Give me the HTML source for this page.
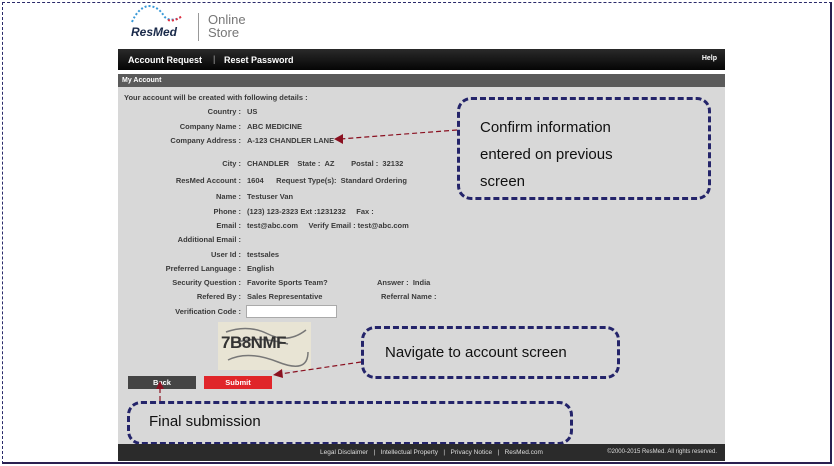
<!DOCTYPE html>
<html><head><meta charset="utf-8"><style>
*{margin:0;padding:0;box-sizing:border-box}
body{width:834px;height:466px;background:#fff;position:relative;overflow:hidden;font-family:"Liberation Sans",Arial,sans-serif}
.a{position:absolute}
.frame{left:2px;top:2px;width:830px;height:462px;border:1px dashed #2a2a6a;border-right:2px solid #2a2050;border-bottom:2px solid #2a2050}
.nav{left:118px;top:49px;width:607px;height:21px;background:linear-gradient(#2a2a2a,#050505);color:#fff;font-weight:bold;font-size:9px}
.hdr{left:118px;top:74px;width:607px;height:13px;background:#5a5a5a;color:#fff;font-weight:bold;font-size:7px;padding:3px 4px}
.body{left:118px;top:87px;width:607px;height:357px;background:#d8d8d8}
.foot{left:118px;top:444px;width:607px;height:17px;background:#2b2b2b;color:#ddd;font-size:6.5px}
.t{position:absolute;font-size:7.5px;font-weight:bold;color:#3a3a3a;white-space:nowrap}
.l{position:absolute;font-size:7.5px;font-weight:bold;color:#3a3a3a;white-space:nowrap;right:593px;text-align:right}
.box{position:absolute;border:3px dashed #24246a;border-radius:14px;font-size:15px;color:#111;white-space:nowrap}
.btn{position:absolute;height:13px;top:376px;color:#fff;font-size:7.5px;font-weight:bold;text-align:center;line-height:13px}
</style></head><body>
<div class="a frame"></div>
<svg class="a" style="left:128px;top:2px" width="60" height="24"><path d="M4 20 Q10 6 20 4 Q30 4 36 14 Q40 20 52 16" fill="none" stroke="#3a9ad8" stroke-width="2" stroke-dasharray="2 2"/><path d="M40 18 Q46 20 54 14" stroke="#e03040" stroke-width="2" fill="none" stroke-dasharray="2 2"/></svg>
<div class="a" style="left:131px;top:25px;font-size:12px;font-weight:bold;font-style:italic;color:#1a2a4a">ResMed</div>
<div class="a" style="left:198px;top:13px;width:1px;height:28px;background:#999"></div>
<div class="a" style="left:208px;top:13px;font-size:13px;color:#777;line-height:13px">Online<br>Store</div>
<div class="a nav"><span class="a" style="left:10px;top:6px">Account Request</span><span class="a" style="left:95px;top:5px;font-weight:normal;color:#aaa">|</span><span class="a" style="left:106px;top:6px">Reset Password</span><span class="a" style="right:8px;top:6px;font-size:7px">Help</span></div>
<div class="a hdr">My Account</div>
<div class="a body"></div>
<div class="t" style="left:124px;top:93px">Your account will be created with following details :</div>
<div class="l" style="top:107px">Country :</div><div class="t" style="left:247px;top:107px">US</div>
<div class="l" style="top:122px">Company Name :</div><div class="t" style="left:247px;top:122px">ABC MEDICINE</div>
<div class="l" style="top:136px">Company Address :</div><div class="t" style="left:247px;top:136px">A-123 CHANDLER LANE</div>
<div class="l" style="top:159px">City :</div><div class="t" style="left:247px;top:159px">CHANDLER &nbsp;&nbsp; State : &nbsp;AZ &nbsp;&nbsp;&nbsp;&nbsp;&nbsp;&nbsp; Postal : &nbsp;32132</div>
<div class="l" style="top:176px">ResMed Account :</div><div class="t" style="left:247px;top:176px">1604 &nbsp;&nbsp;&nbsp;&nbsp; Request Type(s): &nbsp;Standard Ordering</div>
<div class="l" style="top:192px">Name :</div><div class="t" style="left:247px;top:192px">Testuser Van</div>
<div class="l" style="top:207px">Phone :</div><div class="t" style="left:247px;top:207px">(123) 123-2323 Ext :1231232 &nbsp;&nbsp;&nbsp; Fax :</div>
<div class="l" style="top:221px">Email :</div><div class="t" style="left:247px;top:221px">test@abc.com &nbsp;&nbsp;&nbsp; Verify Email : test@abc.com</div>
<div class="l" style="top:235px">Additional Email :</div>
<div class="l" style="top:250px">User Id :</div><div class="t" style="left:247px;top:250px">testsales</div>
<div class="l" style="top:264px">Preferred Language :</div><div class="t" style="left:247px;top:264px">English</div>
<div class="l" style="top:278px">Security Question :</div><div class="t" style="left:247px;top:278px">Favorite Sports Team?</div><div class="t" style="left:377px;top:278px">Answer : &nbsp;India</div>
<div class="l" style="top:292px">Refered By :</div><div class="t" style="left:247px;top:292px">Sales Representative</div><div class="t" style="left:381px;top:292px">Referral Name :</div>
<div class="l" style="top:307px">Verification Code :</div>
<div class="a" style="left:246px;top:305px;width:91px;height:13px;background:#fff;border:1px solid #aaa"></div>
<div class="a" style="left:218px;top:322px;width:93px;height:48px;background:#e8e4d4"></div>
<svg class="a" style="left:218px;top:322px" width="93" height="48"><path d="M8 10 Q30 2 50 12 T88 8 M10 38 Q30 28 60 40 T90 30 M20 20 Q40 14 70 22" stroke="#777" stroke-width="1.5" fill="none"/></svg>
<div class="a" style="left:221px;top:333px;font-size:17px;font-weight:bold;color:#333;letter-spacing:-0.5px">7B8NMF</div>
<div class="btn" style="left:128px;width:68px;background:#444">Back</div>
<div class="btn" style="left:204px;width:68px;background:#e0252a">Submit</div>
<svg class="a" style="left:0;top:0" width="834" height="466">
<g stroke="#8a1020" stroke-width="1.2" stroke-dasharray="5 3" fill="none"><line x1="457" y1="130" x2="340" y2="139"/><line x1="361" y1="362" x2="280" y2="374"/><line x1="160" y1="401" x2="160" y2="388"/></g>
<polygon points="334,139 343,134 343,144" fill="#8a1020"/><polygon points="273,375 282,369 283,378" fill="#8a1020"/><polygon points="160,381 156,389 164,389" fill="#8a1020"/>
</svg>
<div class="box" style="left:457px;top:97px;width:254px;height:103px;padding:14px 20px;line-height:27px">Confirm information<br>entered on previous<br>screen</div>
<div class="box" style="left:361px;top:326px;width:259px;height:53px;padding:15px 21px">Navigate to account screen</div>
<div class="box" style="left:127px;top:401px;width:446px;height:44px;padding:9px 19px">Final submission</div>
<div class="a foot"><span class="a" style="left:202px;top:5px">Legal Disclaimer &nbsp;&nbsp;|&nbsp;&nbsp; Intellectual Property &nbsp;&nbsp;|&nbsp;&nbsp; Privacy Notice &nbsp;&nbsp;|&nbsp;&nbsp; ResMed.com</span><span class="a" style="right:8px;top:5px;font-size:6px">©2000-2015 ResMed. All rights reserved.</span></div>
</body></html>
